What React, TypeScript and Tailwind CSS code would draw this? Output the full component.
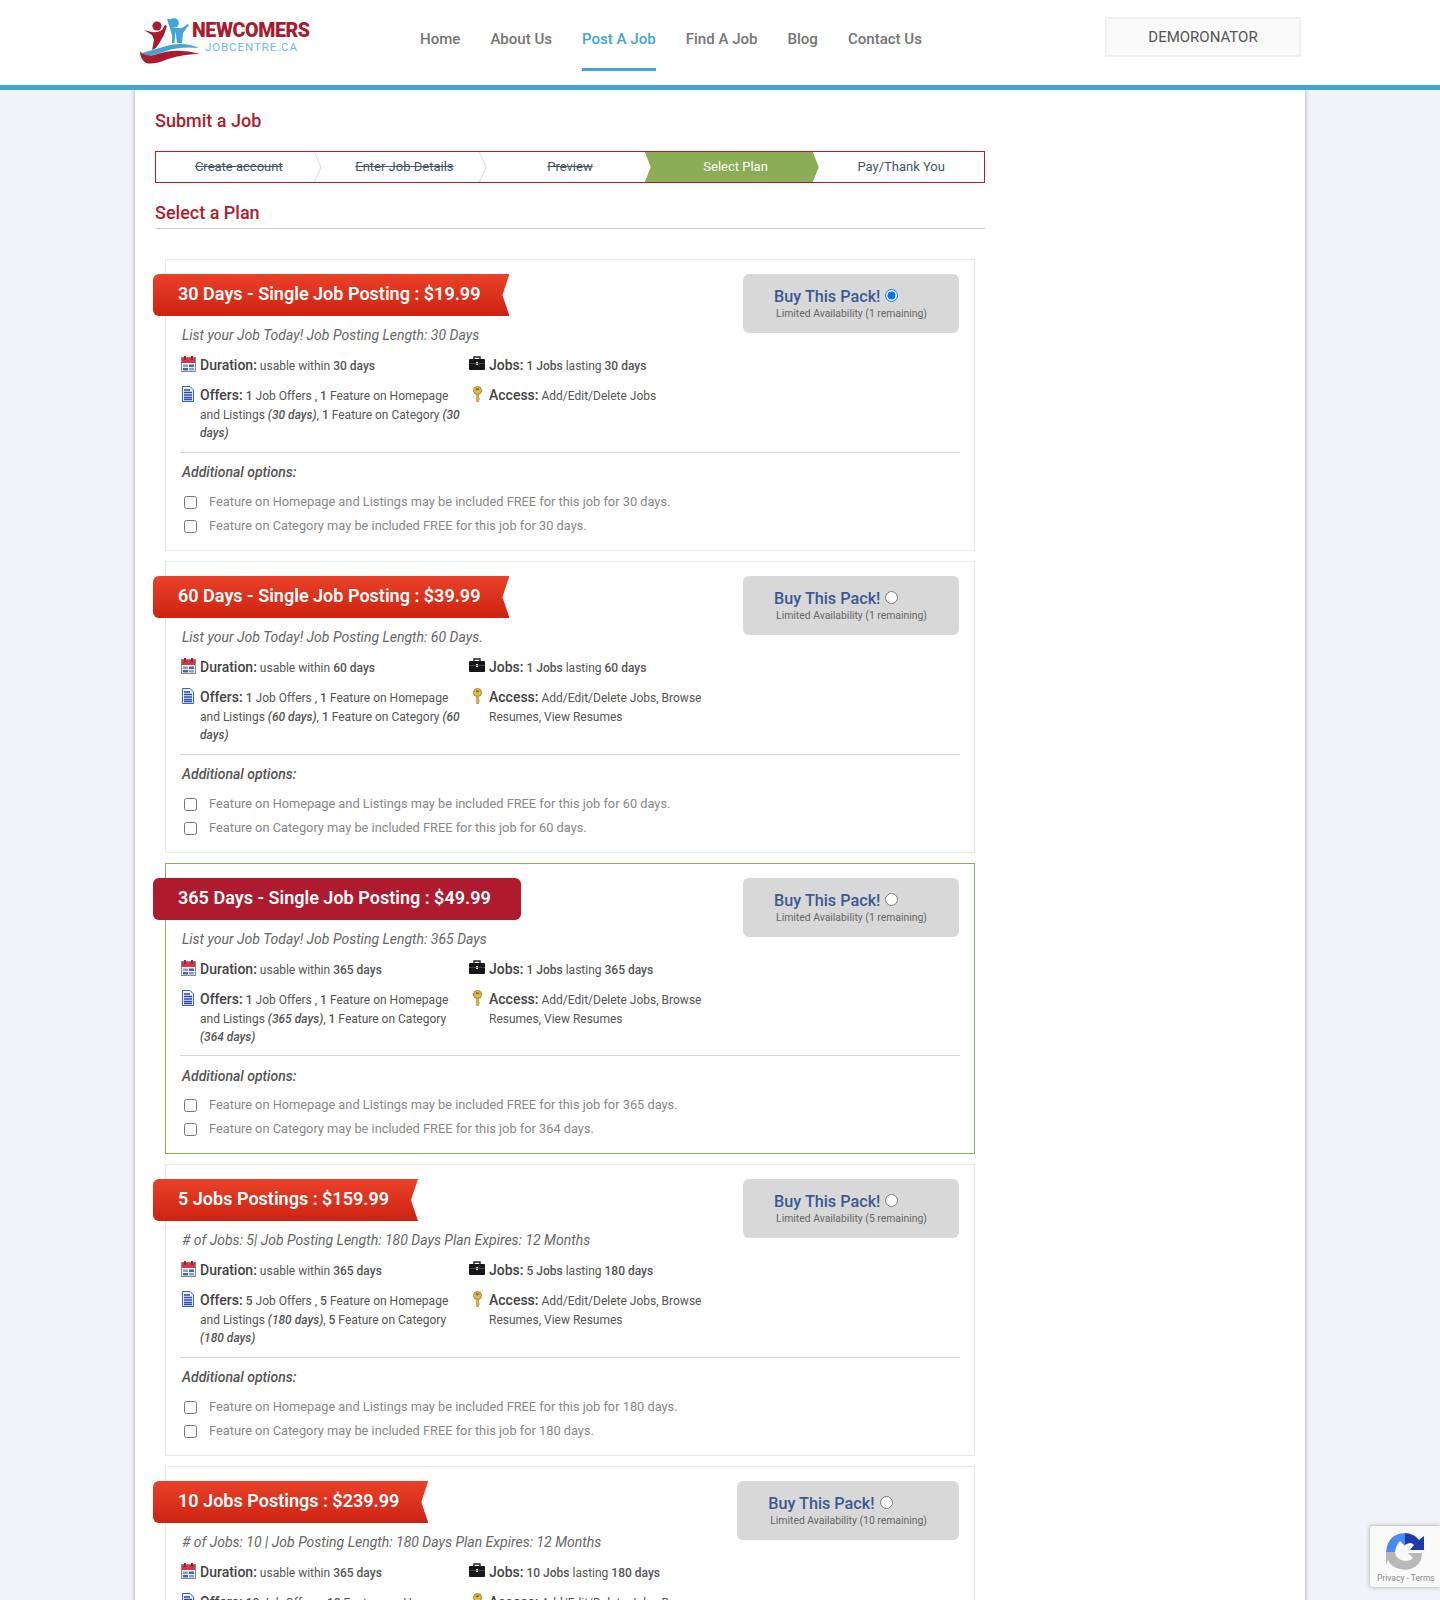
const NAV = ["Home", "About Us", "Post A Job", "Find A Job", "Blog", "Contact Us"];
const STEPS = ["Create account", "Enter Job Details", "Preview", "Select Plan", "Pay/Thank You"];

type Plan = {
  title: string;
  desc: string;
  remaining: number;
  jobs: number;
  within: number;
  lasting: number;
  catDays: number;
  fullAccess: boolean;
  selected?: boolean;
  checked?: boolean;
};

const PLANS: Plan[] = [
  { title: "30 Days - Single Job Posting : $19.99", desc: "List your Job Today! Job Posting Length: 30 Days", remaining: 1, jobs: 1, within: 30, lasting: 30, catDays: 30, fullAccess: false, checked: true },
  { title: "60 Days - Single Job Posting : $39.99", desc: "List your Job Today! Job Posting Length: 60 Days.", remaining: 1, jobs: 1, within: 60, lasting: 60, catDays: 60, fullAccess: true },
  { title: "365 Days - Single Job Posting : $49.99", desc: "List your Job Today! Job Posting Length: 365 Days", remaining: 1, jobs: 1, within: 365, lasting: 365, catDays: 364, fullAccess: true, selected: true },
  { title: "5 Jobs Postings : $159.99", desc: "# of Jobs: 5| Job Posting Length: 180 Days Plan Expires: 12 Months", remaining: 5, jobs: 5, within: 365, lasting: 180, catDays: 180, fullAccess: true },
  { title: "10 Jobs Postings : $239.99", desc: "# of Jobs: 10 | Job Posting Length: 180 Days Plan Expires: 12 Months", remaining: 10, jobs: 10, within: 365, lasting: 180, catDays: 180, fullAccess: true },
];

function Logo() {
  return (
    <div className="flex items-start">
      <svg width="64" height="50" viewBox="0 0 64 50" className="shrink-0">
        <circle cx="21" cy="11" r="4.6" fill="#a81c2f" />
        <path d="M8 15 L16 17 Q21 18 26 15 L29 10 L31 11 L28 20 L24 27 L20 33 Q18 34 16 35 L18 25 L16 20 Z" fill="#a81c2f" />
        <circle cx="38" cy="8" r="4.8" fill="#42a5d6" />
        <path d="M31 4 L34 4 L37 13 L40 13 L46 13 L52 9 L53 10 L47 18 L46 28 L41 28 L39.5 16 L38.5 28 L36 28 L36 20 Z" fill="#42a5d6" />
        <path d="M6 38 Q20 34 34 30 Q50 27 63 33 Q44 31 30 36 Q16 41 7 42 Z" fill="#42a5d6" />
        <path d="M4 36 Q8 42 18 40 Q40 32 64 39 Q48 39 32 44 Q18 50 10 48 Q4 44 4 36 Z" fill="#a81c2f" />
      </svg>
      <div className="-ml-[8px] mt-[5px] flex flex-col">
        <span className="font-['Roboto',sans-serif] text-[19.6px] leading-[21px] font-black tracking-[-0.4px] text-[#a81c2f]">NEWCOMERS</span>
        <span className="ml-[13px] font-['Roboto',sans-serif] text-[11.5px] leading-[13px] tracking-[0.9px] text-[#6dbbe5]">JOBCENTRE.CA</span>
      </div>
    </div>
  );
}

function CalendarIcon() {
  return (
    <svg width="15" height="16" viewBox="0 0 15 16" className="shrink-0">
      <rect x="0.5" y="1.5" width="14" height="14" fill="#f4f4f4" stroke="#8a8a8a" />
      <rect x="1" y="2" width="13" height="5" fill="#d8354a" />
      <rect x="3" y="0" width="2" height="4" fill="#a81c2f" />
      <rect x="10" y="0" width="2" height="4" fill="#a81c2f" />
      <rect x="2" y="8.5" width="5" height="2.5" fill="#7fa3d8" />
      <rect x="8" y="8.5" width="5" height="2.5" fill="#3f67b8" />
      <rect x="2" y="12" width="5" height="2.5" fill="#3f67b8" />
      <rect x="8" y="12" width="5" height="2.5" fill="#7fa3d8" />
    </svg>
  );
}

function DocIcon() {
  return (
    <svg width="14" height="16" viewBox="0 0 14 16" className="shrink-0">
      <path d="M1.5 0.5 H9 L12.5 4 V15.5 H1.5 Z" fill="#eef2fb" stroke="#3a62c0" />
      <path d="M3 4 H9 M3 6.5 H11 M3 9 H11 M3 11.5 H11 M3 13.5 H11" stroke="#2848b0" strokeWidth="1.3" />
    </svg>
  );
}

function BriefcaseIcon() {
  return (
    <svg width="16" height="15" viewBox="0 0 16 15" className="shrink-0">
      <path d="M5 3 V1 H11 V3" fill="none" stroke="#222" strokeWidth="1.4" />
      <rect x="0" y="3" width="16" height="11" rx="1" fill="#161616" />
      <rect x="7" y="6" width="2" height="3" fill="#ddd" />
      <rect x="0" y="7" width="16" height="0.8" fill="#555" />
    </svg>
  );
}

function KeyIcon() {
  return (
    <svg width="11" height="16" viewBox="0 0 11 16" className="shrink-0">
      <circle cx="5.5" cy="4.5" r="4" fill="#e3b94c" stroke="#a8842a" />
      <ellipse cx="5.5" cy="3.2" rx="1.8" ry="1" fill="#8a6a20" />
      <path d="M4.4 8 H6.6 V12 L7.8 13 L6.6 14 V16 H5 L4.4 15.2 Z" fill="#d9ad3e" stroke="#a8842a" strokeWidth="0.5" />
    </svg>
  );
}

function Ribbon({ plan }: { plan: Plan }) {
  if (plan.selected) {
    return (
      <div className="-ml-[13px] h-[42px] w-fit rounded-[6px] bg-[#ae1b2e] pr-[30px] pl-[25px] text-[18.05px] leading-[40px] font-semibold text-white">
        {plan.title}
      </div>
    );
  }
  return (
    <div className="-ml-[13px] h-[42px] w-fit rounded-l-[6px] bg-gradient-to-b from-[#ea4128] to-[#cc2212] pr-[29px] pl-[25px] text-[18.05px] leading-[40px] font-semibold text-white [clip-path:polygon(0_0,100%_0,calc(100%-7px)_50%,100%_100%,0_100%)]">
      {plan.title}
    </div>
  );
}

function BuyBox({ plan }: { plan: Plan }) {
  return (
    <div className="float-right mt-[14px] mr-[15px] h-[59px] rounded-[6px] bg-[#d8d8d8] pt-[12px] pr-[32px] pl-[31px]">
      <div className="flex items-center gap-[5px]">
        <span className="text-[16.2px] leading-[21px] font-medium text-[#3b5a94]">Buy This Pack!</span>
        <input type="radio" name="plan" defaultChecked={plan.checked} className="m-0 -mt-[2px] h-[13px] w-[13px] accent-[#0075ff]" />
      </div>
      <div className="ml-[2px] text-[10.4px] leading-[14px] text-[#666]">
        Limited Availability ({plan.remaining} remaining)
      </div>
    </div>
  );
}

function PlanCard({ plan }: { plan: Plan }) {
  const border = plan.selected ? "border-[#8aad55]" : "border-[#e8e8e8]";
  return (
    <div className={`mb-[10px] ml-[10px] w-[810px] border bg-white ${border}`}>
      <BuyBox plan={plan} />
      <div className="pt-[14px]">
        <Ribbon plan={plan} />
      </div>
      <p className="mt-[9px] ml-[16px] text-[14px] leading-[21px] text-[#666] italic">{plan.desc}</p>
      <div className="mt-[10px] ml-[15px] flex text-[12px] leading-[19px] text-[#555]">
        <div className="flex w-[288px] gap-[4px]">
          <CalendarIcon />
          <div>
            <b className="text-[14px] font-medium text-[#444]">Duration:</b> usable within <b className="font-medium">{plan.within} days</b>
          </div>
        </div>
        <div className="flex gap-[4px]">
          <BriefcaseIcon />
          <div>
            <b className="text-[14px] font-medium text-[#444]">Jobs:</b> <b className="font-medium">{plan.jobs} Jobs</b> lasting <b className="font-medium">{plan.lasting} days</b>
          </div>
        </div>
      </div>
      <div className="mt-[10px] ml-[15px] flex text-[12px] leading-[18.5px] text-[#555]">
        <div className="flex w-[288px] gap-[5px]">
          <DocIcon />
          <div className="w-[265px]">
            <b className="text-[14px] font-medium text-[#444]">Offers:</b> <b className="font-medium">{plan.jobs}</b> Job Offers , <b className="font-medium">{plan.jobs}</b> Feature on Homepage and Listings{" "}
            <b className="font-medium italic">({plan.lasting} days)</b>, <b className="font-medium">{plan.jobs}</b> Feature on Category{" "}
            <b className="font-medium italic">({plan.catDays} days)</b>
          </div>
        </div>
        <div className="flex gap-[6px] pl-[3px]">
          <KeyIcon />
          <div className="w-[245px]">
            <b className="text-[14px] font-medium text-[#444]">Access:</b> Add/Edit/Delete Jobs{plan.fullAccess ? ", Browse Resumes, View Resumes" : ""}
          </div>
        </div>
      </div>
      <div className={`mr-[14px] ml-[14px] border-t border-[#d4d4d4] ${plan.selected ? "mt-[8.5px]" : "mt-[9.5px]"}`} />
      <div className={`ml-[16px] text-[14px] leading-[19px] font-medium text-[#555] italic ${plan.selected ? "mt-[11px]" : "mt-[10px]"}`}>Additional options:</div>
      <div className={`mb-[12px] ml-[18px] text-[12.8px] leading-[24px] text-[#888] ${plan.selected ? "mt-[7px]" : "mt-[8px]"}`}>
        <label className="flex items-center gap-[12px]">
          <input type="checkbox" className="m-0 h-[13px] w-[13px]" />
          Feature on Homepage and Listings may be included FREE for this job for {plan.lasting} days.
        </label>
        <label className="flex items-center gap-[12px]">
          <input type="checkbox" className="m-0 h-[13px] w-[13px]" />
          Feature on Category may be included FREE for this job for {plan.catDays} days.
        </label>
      </div>
    </div>
  );
}

function Stepper() {
  return (
    <div className="mt-[18px] flex h-[32px] w-[830px] border border-[#ae1c2f] text-[13px] leading-[30px] text-[#44556a]">
      {STEPS.map((s, i) => (
        <div key={s} className="relative flex-1 text-center">
          {i === 3 && (
            <div className="absolute top-0 -left-[8px] h-[30px] w-[174px] bg-[#8aad55] [clip-path:polygon(0_0,168px_0,174px_50%,168px_100%,0_100%,6px_50%)]" />
          )}
          <span className={`relative ${i < 3 ? "line-through" : ""} ${i === 3 ? "text-white" : ""}`}>{s}</span>
          {i < 2 && (
            <svg width="8" height="30" viewBox="0 0 8 30" className="absolute top-0 right-0">
              <path d="M0.5 0 L7 15 L0.5 30" fill="none" stroke="#dcdcdc" />
            </svg>
          )}
        </div>
      ))}
    </div>
  );
}

function Recaptcha() {
  return (
    <div className="absolute top-[1526px] left-[1370px] h-[61px] w-[70px] rounded-l-[3px] bg-[#f9f9f9] shadow-[0_0_4px_rgba(0,0,0,0.35)]">
      <svg width="38" height="38" viewBox="0 0 38 38" className="absolute top-[6px] left-[16px]">
        <path d="M19 0 V13 L14 8 Q10 12 9 19 H0 Q1 8 8 3 Q13 0 19 0 Z" transform="translate(0 1)" fill="#4a8af4" />
        <path d="M19 1 Q29 2 33 8 L38 4 V18 H24 L28 13 Q25 9 19 13 Z" fill="#1c3aa9" />
        <path d="M0 20 H9 Q10 28 19 29 Q24 29 27 26 L22 21 H36 Q36 30 29 35 Q22 39 14 37 Q5 35 2 28 L0 33 Z" fill="#b8b8b8" />
      </svg>
      <div className="absolute top-[47px] left-[7px] text-[8.5px] leading-[11px] whitespace-nowrap text-[#888]">Privacy - Terms</div>
    </div>
  );
}

export default function App() {
  return (
    <div className="relative h-[1600px] overflow-hidden bg-[#f1f3f8] font-['Roboto',sans-serif]">
      <header className="relative z-10 flex h-[90px] border-b-[5px] border-[#42a5d6] bg-white">
        <div className="mt-[15px] ml-[136px] w-[284px]">
          <Logo />
        </div>
        <nav className="flex gap-[30px] text-[15.05px] font-medium text-[#757575]">
          {NAV.map((n) => (
            <a key={n} className={`h-[71px] pt-[29px] leading-[21px] ${n === "Post A Job" ? "border-b-[3px] border-[#42a5d6] text-[#42a5d6]" : ""}`}>
              {n}
            </a>
          ))}
        </nav>
        <div className="mt-[17px] ml-[183px] flex h-[40px] w-[196px] items-center justify-center border-2 border-[#f0f0f0] bg-[#fafafa] text-[15px] text-[#555]">
          DEMORONATOR
        </div>
      </header>
      <main className="ml-[135px] min-h-[1510px] w-[1170px] bg-white pt-[19px] pl-[20px] shadow-[0_0_4px_rgba(0,0,0,0.35)]">
        <h1 className="text-[18px] leading-[24px] font-medium text-[#ae1c2f]">Submit a Job</h1>
        <Stepper />
        <h2 className="mt-[18px] mb-[30px] w-[830px] border-b border-[#cfcfcf] pb-[3px] text-[18px] leading-[24px] font-medium text-[#ae1c2f]">Select a Plan</h2>
        {PLANS.map((p) => (
          <PlanCard key={p.title} plan={p} />
        ))}
      </main>
      <Recaptcha />
    </div>
  );
}
